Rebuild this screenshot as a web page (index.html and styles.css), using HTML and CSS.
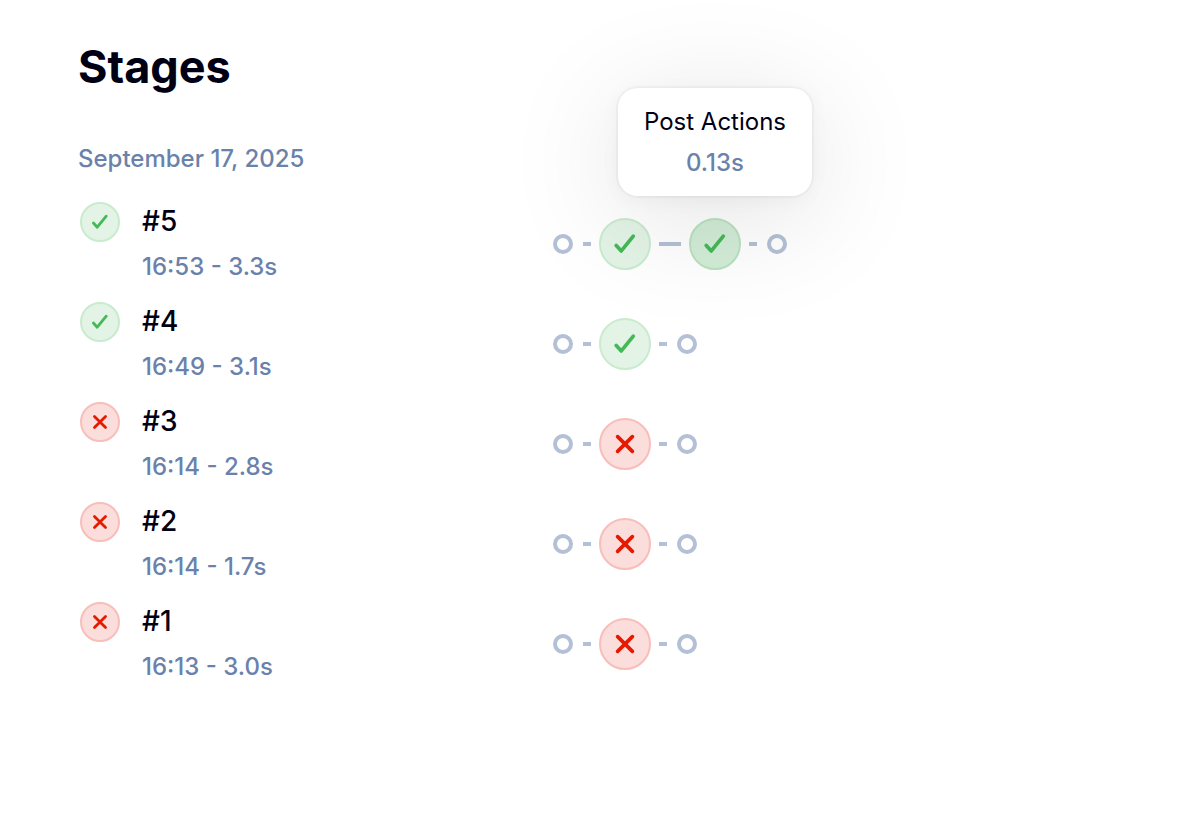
FILE: index.html
```
<!DOCTYPE html>
<html lang="en">
<head>
    <meta charset="UTF-8">
    <meta name="viewport" content="width=device-width, initial-scale=1.0">
    <title>Stages</title>
    <link rel="stylesheet" href="styles.css">
</head>
<body>
    <!-- Shared status icons -->
    <svg class="icons" aria-hidden="true">
        <symbol id="check" viewBox="0 0 52 52">
            <path d="M16.500 27.500l5.500 6 13-16" />
        </symbol>
        <symbol id="cross" viewBox="0 0 52 52">
            <path d="M18 18l16 16M34 18l-16 16" />
        </symbol>
    </svg>
    <main class="container">
        <h1>Stages</h1>
        <h2>September 17, 2025</h2>
        <ul class="runs">
            <li class="run">
                <a class="run-link" href="#run-5">
                    <span class="status success"><svg><use href="#check" /></svg></span>
                    <span class="run-name">#5</span>
                    <span class="run-time">16:53 - 3.3s</span>
                </a>
                <div class="graph">
                    <span class="node"></span>
                    <span class="line"></span>
                    <a class="stage success" href="#run-5-stage-1" aria-label="Stage passed"><svg><use href="#check" /></svg></a>
                    <span class="line long"></span>
                    <div class="stage-wrap">
                        <a class="stage success active" href="#run-5-post" aria-label="Post Actions passed"><svg><use href="#check" /></svg></a>
                        <div class="tooltip" role="tooltip">
                            <div>Post Actions</div>
                            <div class="tooltip-time">0.13s</div>
                        </div>
                    </div>
                    <span class="line"></span>
                    <span class="node"></span>
                </div>
            </li>
            <li class="run">
                <a class="run-link" href="#run-4">
                    <span class="status success"><svg><use href="#check" /></svg></span>
                    <span class="run-name">#4</span>
                    <span class="run-time">16:49 - 3.1s</span>
                </a>
                <div class="graph">
                    <span class="node"></span>
                    <span class="line"></span>
                    <a class="stage success" href="#run-4-stage-1" aria-label="Stage passed"><svg><use href="#check" /></svg></a>
                    <span class="line"></span>
                    <span class="node"></span>
                </div>
            </li>
            <li class="run">
                <a class="run-link" href="#run-3">
                    <span class="status failed"><svg><use href="#cross" /></svg></span>
                    <span class="run-name">#3</span>
                    <span class="run-time">16:14 - 2.8s</span>
                </a>
                <div class="graph">
                    <span class="node"></span>
                    <span class="line"></span>
                    <a class="stage failed" href="#run-3-stage-1" aria-label="Stage failed"><svg><use href="#cross" /></svg></a>
                    <span class="line"></span>
                    <span class="node"></span>
                </div>
            </li>
            <li class="run">
                <a class="run-link" href="#run-2">
                    <span class="status failed"><svg><use href="#cross" /></svg></span>
                    <span class="run-name">#2</span>
                    <span class="run-time">16:14 - 1.7s</span>
                </a>
                <div class="graph">
                    <span class="node"></span>
                    <span class="line"></span>
                    <a class="stage failed" href="#run-2-stage-1" aria-label="Stage failed"><svg><use href="#cross" /></svg></a>
                    <span class="line"></span>
                    <span class="node"></span>
                </div>
            </li>
            <li class="run">
                <a class="run-link" href="#run-1">
                    <span class="status failed"><svg><use href="#cross" /></svg></span>
                    <span class="run-name">#1</span>
                    <span class="run-time">16:13 - 3.0s</span>
                </a>
                <div class="graph">
                    <span class="node"></span>
                    <span class="line"></span>
                    <a class="stage failed" href="#run-1-stage-1" aria-label="Stage failed"><svg><use href="#cross" /></svg></a>
                    <span class="line"></span>
                    <span class="node"></span>
                </div>
            </li>
        </ul>
    </main>
</body>
</html>
```
FILE: styles.css
```
body {
    font-family: Inter, sans-serif;
    font-size: 24px;
    line-height: 32px;
    margin: 0;
    color: #000014;
    background-color: #fff;
}

.icons {
    position: absolute;
    width: 0;
    height: 0;
}

.container {
    padding: 36px 78px;
}

h1 {
    margin: 0;
    font-size: 45px;
    font-weight: 700;
    line-height: 62px;
}

h2 {
    margin: 45px 0 27px;
    font-size: 24px;
    font-weight: 500;
    line-height: 32px;
    color: #6a82ab;
}

.runs {
    list-style: none;
    margin: 0;
    padding: 0;
}

.run {
    display: grid;
    grid-template-columns: 473px 1fr;
    height: 100px;
}

.run-link {
    display: grid;
    grid-template-columns: 40px 1fr;
    grid-template-rows: 40px 32px;
    column-gap: 22px;
    row-gap: 9px;
    align-content: start;
    padding-left: 2px;
    color: inherit;
    text-decoration: none;
}

.run-name {
    font-size: 28px;
    font-weight: 500;
    line-height: 38px;
}

.run-time {
    grid-column: 2;
    font-weight: 500;
    color: #6a82ab;
}

.status,
.stage {
    box-sizing: border-box;
    display: block;
    border: 2px solid;
    border-radius: 50%;
}

.status {
    width: 40px;
    height: 40px;
}

.stage {
    width: 52px;
    height: 52px;
}

.status svg,
.stage svg {
    display: block;
    width: 100%;
    height: 100%;
    overflow: visible;
    fill: none;
    stroke: currentColor;
    stroke-width: 4px;
    stroke-linecap: round;
    stroke-linejoin: round;
}

.success {
    color: #44b958;
    background-color: #e3f4e6;
    border-color: #c9ebce;
}

.success.active {
    background-color: #d2edd7;
    border-color: #b9e2c0;
}

.failed {
    color: #e61a00;
    background-color: #fbdddb;
    border-color: #f7beba;
}

.graph {
    display: flex;
    align-items: center;
    align-self: start;
    gap: 8px;
    height: 84px;
}

.node {
    box-sizing: border-box;
    width: 20px;
    height: 20px;
    margin: 0 2px;
    border: 4px solid #b3c0d5;
    border-radius: 50%;
}

.line {
    width: 8px;
    height: 4px;
    background-color: #b3c0d5;
}

.line.long {
    width: 22px;
}

.stage-wrap {
    position: relative;
}

.tooltip {
    position: absolute;
    bottom: 74px;
    left: 50%;
    transform: translateX(-50%);
    padding: 18px 26px 17px;
    border-radius: 20px;
    background-color: #fff;
    box-shadow: 0 0 0 2px rgba(0, 0, 20, 0.03), 0 4px 20px rgba(0, 0, 20, 0.04), 0 20px 120px rgba(0, 0, 20, 0.12);
    text-align: center;
    white-space: nowrap;
}

.tooltip-time {
    margin-top: 9px;
    font-weight: 500;
    color: #6a82ab;
}
```
